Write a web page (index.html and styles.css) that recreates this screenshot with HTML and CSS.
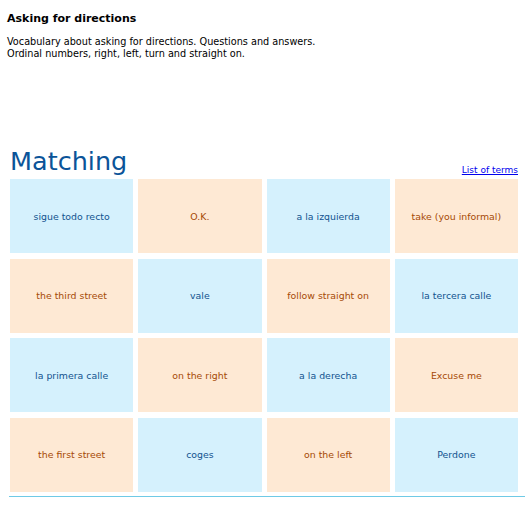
FILE: index.html
```html
<!DOCTYPE html>
<html lang="en">
<head>
<meta charset="utf-8">
<title>Asking for directions</title>
<link rel="stylesheet" href="styles.css">
</head>
<body>
<header class="intro">
  <h1 class="intro-title">Asking for directions</h1>
  <p class="intro-desc">Vocabulary about asking for directions. Questions and answers.<br>Ordinal numbers, right, left, turn and straight on.</p>
</header>
<section class="activity">
  <div class="activity-head">
    <h2 class="activity-title">Matching</h2>
    <a class="terms-link" href="#">List of terms</a>
  </div>
  <div class="cards">
    <div class="card es">sigue todo recto</div>
    <div class="card en">O.K.</div>
    <div class="card es">a la izquierda</div>
    <div class="card en">take (you informal)</div>
    <div class="card en">the third street</div>
    <div class="card es">vale</div>
    <div class="card en">follow straight on</div>
    <div class="card es">la tercera calle</div>
    <div class="card es">la primera calle</div>
    <div class="card en">on the right</div>
    <div class="card es">a la derecha</div>
    <div class="card en">Excuse me</div>
    <div class="card en">the first street</div>
    <div class="card es">coges</div>
    <div class="card en">on the left</div>
    <div class="card es">Perdone</div>
  </div>
</section>
</body>
</html>
```

FILE: styles.css
```css
html, body {
  margin: 0;
  padding: 0;
  background: #ffffff;
}
body {
  font-family: "DejaVu Sans", Verdana, sans-serif;
  color: #000;
}
.intro {
  padding: 0 7px;
}
.intro-title {
  margin: 12px 0 0;
  font-size: 11px;
  line-height: 13px;
  font-weight: bold;
}
.intro-desc {
  margin: 11px 0 0;
  font-size: 9.7px;
  line-height: 12px;
}
.activity {
  margin: 86px 2px 0 9px;
  padding: 0 7px 4px 1px;
  border-bottom: 1px solid #6fcae6;
}
.activity-head {
  display: flex;
  justify-content: space-between;
  align-items: flex-end;
  height: 30px;
}
.activity-title {
  margin: 0;
  font-size: 25.5px;
  line-height: 30px;
  font-weight: normal;
  color: #0b5499;
}
.terms-link {
  font-size: 9px;
  line-height: 12px;
  color: #0000ee;
  text-decoration: underline;
}
.cards {
  margin-top: 3px;
  display: grid;
  grid-template-columns: repeat(4, 1fr);
  grid-auto-rows: 74px;
  column-gap: 5px;
  row-gap: 5.67px;
}
.card {
  display: flex;
  align-items: center;
  justify-content: center;
  text-align: center;
  font-size: 9.4px;
}
.card.es {
  background: #d5f1fd;
  color: #12538f;
}
.card.en {
  background: #fee9d4;
  color: #a64a06;
}
```
